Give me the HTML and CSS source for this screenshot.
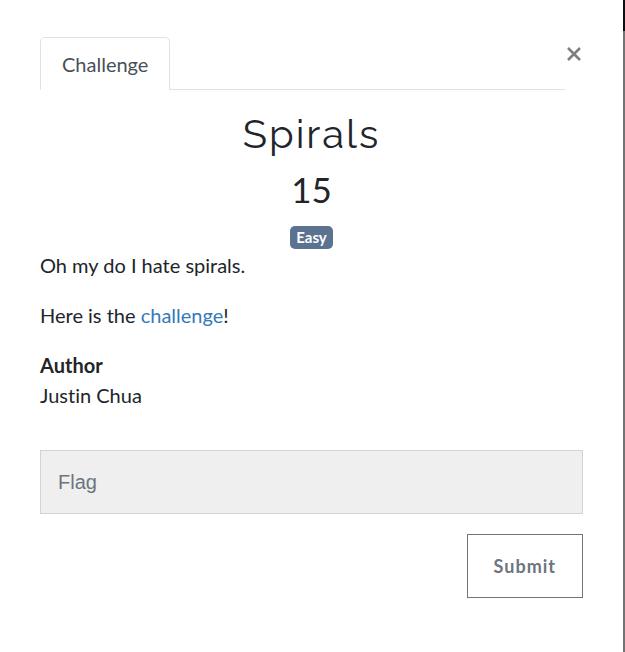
FILE: index.html
```html
<!DOCTYPE html>
<html lang="en">
<head>
<meta charset="utf-8">
<meta name="viewport" content="width=device-width, initial-scale=1">
<title>Spirals</title>
<link rel="stylesheet" href="styles.css">
</head>
<body>
<div class="page">
  <main class="modal">
    <header class="modal-header">
      <nav class="tabs"><a class="tab" href="#challenge">Challenge</a></nav>
      <button class="close" type="button" aria-label="Close">
        <svg width="18" height="18" viewBox="0 0 18 18" fill="none" stroke="#7f7f7f" stroke-width="2.6" aria-hidden="true"><path d="M3 3 15 15M15 3 3 15"/></svg>
      </button>
    </header>
    <section class="challenge" id="challenge">
      <h2 class="name">Spirals</h2>
      <h3 class="value">15</h3>
      <div class="tags"><span class="badge">Easy</span></div>
      <p>Oh my do I hate spirals.</p>
      <p>Here is the <a class="link" href="#challenge">challenge</a>!</p>
      <p><strong>Author</strong><br>Justin Chua</p>
    </section>
    <form class="answer">
      <input class="flag" type="text" placeholder="Flag" aria-label="Flag">
      <button class="submit" type="button">Submit</button>
    </form>
  </main>
  <div class="backdrop"></div>
</div>
</body>
</html>
```
FILE: styles.css
```css
* {
  box-sizing: border-box;
}

body {
  margin: 0;
  background: #fff;
  color: #212529;
  font: 20px/30px Lato, sans-serif;
  font-variant-ligatures: none;
}

.page {
  display: flex;
  min-height: 100vh;
}

.modal {
  flex: 1;
  padding: 37px 40px 40px;
}

.backdrop {
  width: 2px;
  background: linear-gradient(#0b0e12 31px, #737373 31px);
}

.modal-header {
  display: flex;
}

.tabs {
  display: flex;
  flex: 1;
  border-bottom: 1px solid #dee2e6;
}

.tab {
  margin-bottom: -1px;
  padding: 11px 21px 10px;
  border: 1px solid #dee2e6;
  border-bottom-color: #fff;
  border-radius: 5px 5px 0 0;
  background: #fff;
  color: #495057;
  text-decoration: none;
}

.close {
  align-self: flex-start;
  width: 18px;
  margin-top: 8px;
  padding: 0;
  border: 0;
  background: none;
  line-height: 0;
}

.challenge {
  padding-top: 20px;
}

.name,
.value {
  margin: 0 0 10px;
  font-weight: 400;
  text-align: center;
}

.name {
  font: 400 40px/48px Raleway, Lato, sans-serif;
  letter-spacing: 2px;
}

.value {
  font-size: 35px;
  line-height: 42px;
}

.tags {
  display: flex;
  justify-content: center;
  padding: 6px 0 1px;
}

.badge {
  padding: 4px 6px;
  border-radius: 5px;
  background: #5b7290;
  color: #fff;
  font-size: 15px;
  font-weight: 700;
  line-height: 15px;
}

.challenge p {
  margin: 0 0 20px;
}

.challenge strong {
  font-weight: 700;
}

.link {
  color: #337ab7;
  text-decoration: none;
}

.answer {
  display: flex;
  flex-direction: column;
  gap: 20px;
  padding-top: 20px;
}

.flag {
  width: 100%;
  height: 64px;
  padding: 0 17px;
  border: 1px solid #ced4da;
  border-radius: 0;
  background: #efefef;
  color: #495057;
  font: 20px/30px "Liberation Sans", sans-serif;
}

.flag::placeholder {
  color: #6c757d;
  opacity: 1;
}

.submit {
  align-self: flex-end;
  height: 64px;
  padding: 0 26px;
  border: 1px solid #6c757d;
  background: #fff;
  color: #6c757d;
  font: 700 18px/30px Lato, sans-serif;
  letter-spacing: 1px;
}
```
